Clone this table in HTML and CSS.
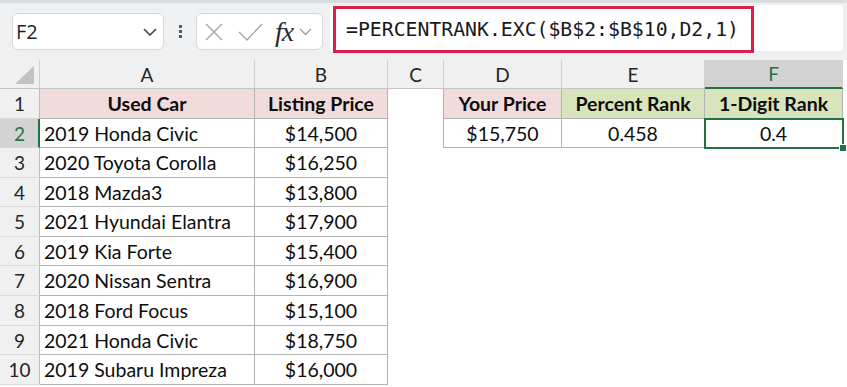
FILE: index.html
```html
<!DOCTYPE html>
<html>
<head>
<meta charset="utf-8">
<link rel="stylesheet" href="styles.css">
</head>
<body>
<div class="toolbar">
  <div class="namebox">
    <span class="nb-text">F2</span>
    <svg class="nb-chev" width="14" height="8" viewBox="0 0 14 8"><path d="M1 1 L7 7 L13 1" fill="none" stroke="#444" stroke-width="1.6"/></svg>
  </div>
  <div class="dots"><i></i><i></i><i></i></div>
  <div class="fbox">
    <svg class="ic-x" width="18" height="18" viewBox="0 0 18 18"><path d="M1 1 L17 17 M17 1 L1 17" stroke="#a3a3a3" stroke-width="1.3" fill="none"/></svg>
    <svg class="ic-check" width="25" height="18" viewBox="0 0 25 18"><path d="M1 9 L9 17 L24 1" stroke="#a3a3a3" stroke-width="1.3" fill="none"/></svg>
    <span class="fx">fx</span>
    <svg class="ic-chev" width="13" height="8" viewBox="0 0 13 8"><path d="M1 1 L6.5 6.5 L12 1" stroke="#9a9a9a" stroke-width="1.3" fill="none"/></svg>
  </div>
  <div class="formula">
    <div class="formula-hl">=PERCENTRANK.EXC($B$2:$B$10,D2,1)</div>
  </div>
</div>

<div class="sheet">
  <div class="corner"><svg width="19" height="18" viewBox="0 0 19 18"><path d="M19 0 L19 18 L0 18 Z" fill="#c2c2c2"/></svg></div>
  <div class="ch">A</div>
  <div class="ch">B</div>
  <div class="ch">C</div>
  <div class="ch">D</div>
  <div class="ch">E</div>
  <div class="ch ch-sel">F</div>

  <div class="rh">1</div>
  <div class="c t pink b ctr">Used Car</div>
  <div class="c t pink b ctr">Listing Price</div>
  <div class="c edge"></div>
  <div class="c t pink b ctr">Your Price</div>
  <div class="c t green b ctr">Percent Rank</div>
  <div class="c t green b ctr">1-Digit Rank</div>

  <div class="rh rh-sel">2</div>
  <div class="c t">2019 Honda Civic</div>
  <div class="c t ctr">$14,500</div>
  <div class="c edge"></div>
  <div class="c t ctr">$15,750</div>
  <div class="c t ctr">0.458</div>
  <div class="c t ctr active">0.4</div>

  <div class="rh">3</div>
  <div class="c t">2020 Toyota Corolla</div>
  <div class="c t ctr">$16,250</div>
  <div class="c"></div><div class="c"></div><div class="c"></div><div class="c"></div>

  <div class="rh">4</div>
  <div class="c t">2018 Mazda3</div>
  <div class="c t ctr">$13,800</div>
  <div class="c"></div><div class="c"></div><div class="c"></div><div class="c"></div>

  <div class="rh">5</div>
  <div class="c t">2021 Hyundai Elantra</div>
  <div class="c t ctr">$17,900</div>
  <div class="c"></div><div class="c"></div><div class="c"></div><div class="c"></div>

  <div class="rh">6</div>
  <div class="c t">2019 Kia Forte</div>
  <div class="c t ctr">$15,400</div>
  <div class="c"></div><div class="c"></div><div class="c"></div><div class="c"></div>

  <div class="rh">7</div>
  <div class="c t">2020 Nissan Sentra</div>
  <div class="c t ctr">$16,900</div>
  <div class="c"></div><div class="c"></div><div class="c"></div><div class="c"></div>

  <div class="rh">8</div>
  <div class="c t">2018 Ford Focus</div>
  <div class="c t ctr">$15,100</div>
  <div class="c"></div><div class="c"></div><div class="c"></div><div class="c"></div>

  <div class="rh">9</div>
  <div class="c t">2021 Honda Civic</div>
  <div class="c t ctr">$18,750</div>
  <div class="c"></div><div class="c"></div><div class="c"></div><div class="c"></div>

  <div class="rh">10</div>
  <div class="c t">2019 Subaru Impreza</div>
  <div class="c t ctr">$16,000</div>
  <div class="c"></div><div class="c"></div><div class="c"></div><div class="c"></div>
</div>
</body>
</html>
```

FILE: styles.css
```css
html, body {
  margin: 0;
  padding: 0;
  background: #ffffff;
}
body {
  width: 847px;
  height: 387px;
  overflow: hidden;
  font-family: Lato, "Liberation Sans", sans-serif;
}

/* ---------- toolbar ---------- */
.toolbar {
  box-sizing: border-box;
  height: 60px;
  background: #eef0f2;
  border-top: 3px solid #dadde0;
  display: flex;
  align-items: flex-start;
  padding-left: 12px;
}
.namebox {
  box-sizing: border-box;
  margin-top: 10px;
  width: 152px;
  height: 37px;
  background: #fff;
  border: 1px solid #d6d8da;
  border-radius: 6px;
  display: flex;
  align-items: center;
  justify-content: space-between;
  padding: 0 6px 0 3px;
}
.nb-text {
  font-family: "Open Sans", "Noto Sans", sans-serif;
  font-size: 20px;
  color: #1f1f1f;
}
.dots {
  width: 32px;
  height: 37px;
  margin-top: 10px;
  display: flex;
  flex-direction: column;
  align-items: center;
  justify-content: center;
  gap: 2px;
}
.dots i {
  display: block;
  width: 3px;
  height: 3px;
  background: #5a5a5a;
}
.fbox {
  box-sizing: border-box;
  margin-top: 10px;
  width: 127px;
  height: 37px;
  background: #fff;
  border: 1px solid #d6d8da;
  border-radius: 6px;
  display: flex;
  align-items: center;
  padding-left: 8px;
}
.ic-x { display: block; }
.ic-check { display: block; margin-left: 15px; }
.fx {
  margin-left: 12px;
  font-family: "Liberation Serif", serif;
  font-style: italic;
  font-size: 28px;
  line-height: 1;
  color: #2b2b2b;
  margin-top: 1px;
  letter-spacing: -1px;
}
.ic-chev { display: block; margin-left: 6px; margin-top: 1px; }

.formula {
  margin-left: 7px;
  margin-top: 2px;
  width: 513px;
  height: 46px;
  background: #fff;
  border-radius: 4px;
  display: flex;
  align-items: flex-start;
}
.formula-hl {
  box-sizing: border-box;
  margin-left: 3px;
  margin-top: 1px;
  width: 421px;
  height: 47px;
  border: 3px solid #dc1f48;
  display: flex;
  align-items: center;
  padding-left: 10px;
  font-family: "DejaVu Sans Mono", monospace;
  font-size: 19.8px;
  color: #1a1a1a;
  white-space: nowrap;
}

/* ---------- sheet ---------- */
.sheet {
  display: grid;
  grid-template-columns: 40px 215px 133px 56px 118px 143px 138px;
  grid-template-rows: 29px 30px 29px 30px 29px 30px 29px 30px 30px 29px 30px;
  width: 843px;
}
.corner {
  box-sizing: border-box;
  background: #f0f0f0;
  border-right: 1px solid #cfcfcf;
  border-bottom: 1px solid #c4c4c4;
  display: flex;
  align-items: flex-end;
  justify-content: flex-end;
  padding: 0 5px 4px 0;
}
.corner svg { display: block; }
.ch {
  box-sizing: border-box;
  background: #f0f0f0;
  border-right: 1px solid #d0d0d0;
  border-bottom: 1px solid #c4c4c4;
  display: flex;
  align-items: center;
  justify-content: center;
  font-size: 19px;
  color: #262626;
}
.ch-sel {
  background: #d3d3d3;
  color: #1f7244;
  border-bottom: 2px solid #217346;
}
.rh {
  box-sizing: border-box;
  background: #f0f0f0;
  border-right: 1px solid #bdbdbd;
  border-bottom: 1px solid #dadada;
  display: flex;
  align-items: center;
  justify-content: center;
  font-size: 19px;
  color: #262626;
}
.rh-sel {
  background: #d3d3d3;
  color: #1f7244;
  border-right: 2px solid #217346;
  padding-left: 1px;
}
.c {
  box-sizing: border-box;
  background: #fff;
  display: flex;
  align-items: center;
  font-size: 19.5px;
  color: #0d0d0d;
  white-space: nowrap;
  padding-left: 4px;
}
.t {
  border-right: 1px solid #b3b3b3;
  border-bottom: 1px solid #b3b3b3;
}
.edge { border-right: 1px solid #b3b3b3; }
.ctr { justify-content: center; padding-left: 0; }
.b { font-weight: 700; }
.pink { background: #f2dcdb; }
.green { background: #d8e4bc; }
.active {
  position: relative;
  outline: 2px solid #217346;
  outline-offset: -1px;
}
.active::after {
  content: "";
  position: absolute;
  right: -4px;
  bottom: -4px;
  width: 6px;
  height: 6px;
  background: #217346;
  border-left: 1px solid #fff;
  border-top: 1px solid #fff;
}
```
